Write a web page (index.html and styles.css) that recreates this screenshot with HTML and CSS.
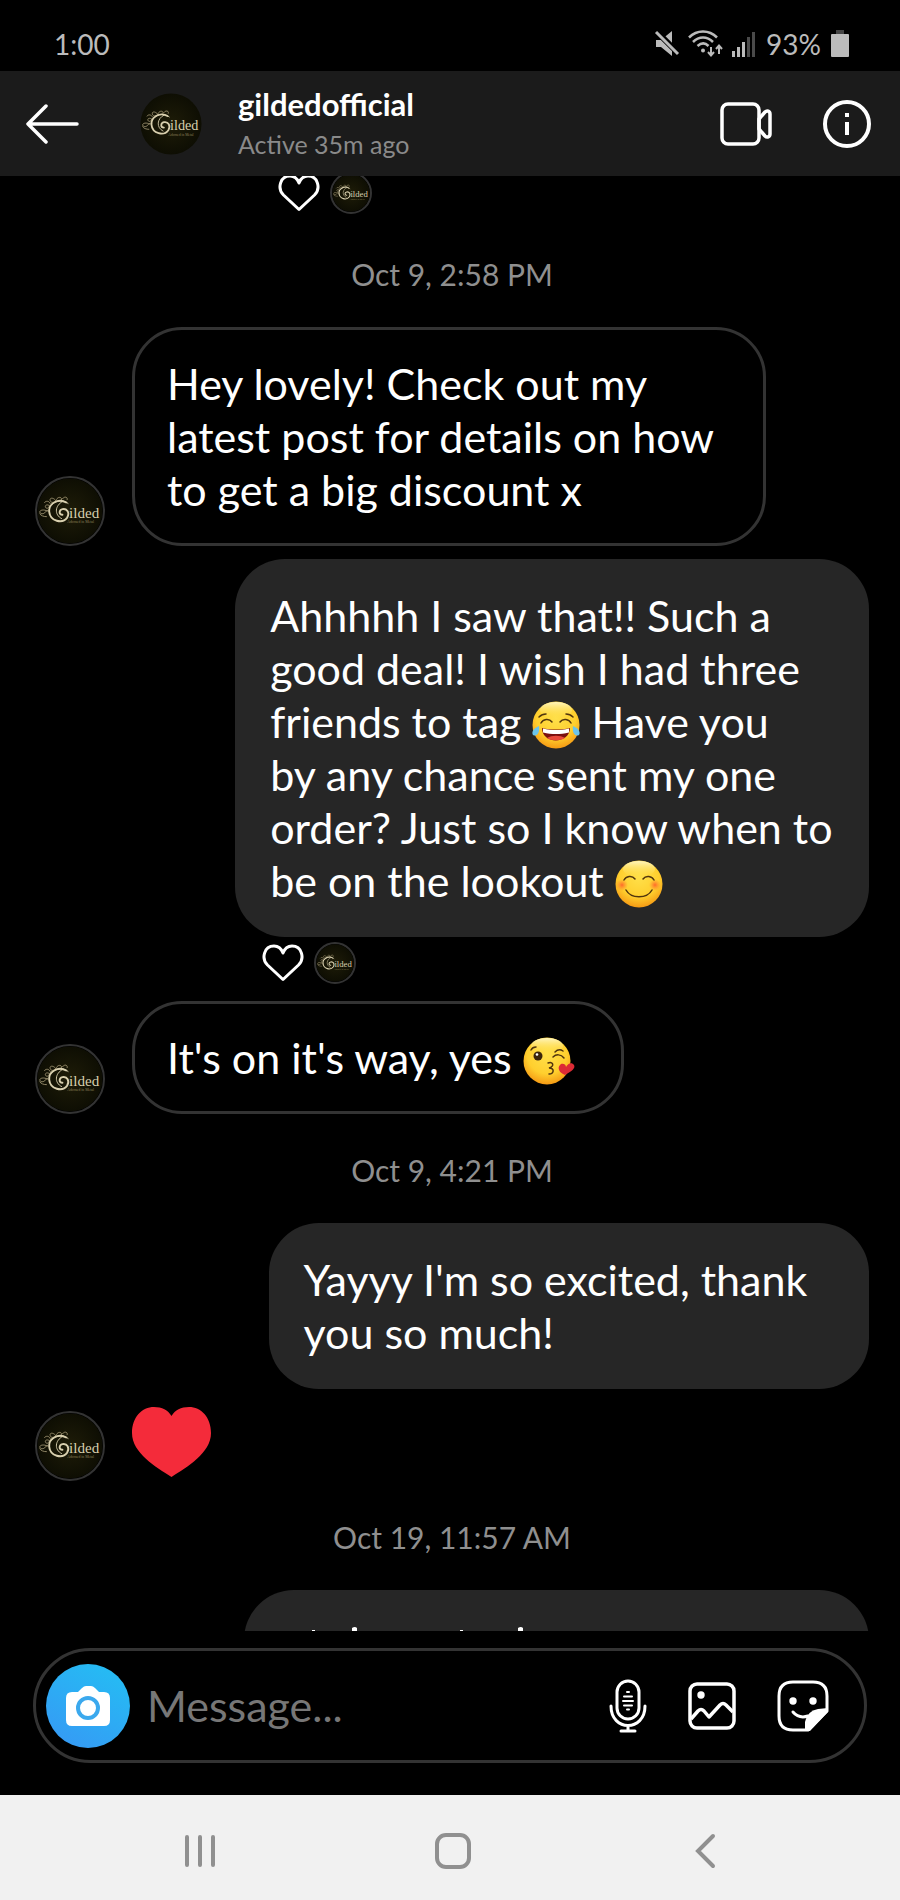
FILE: index.html
```html
<!DOCTYPE html>
<html lang="en">
<head>
    <meta charset="UTF-8">
    <meta name="viewport" content="width=device-width, initial-scale=1.0">
    <title>gildedofficial</title>
    <link rel="stylesheet" href="styles.css">
</head>
<body>

<!-- shared drawings -->
<svg class="defs" width="0" height="0" aria-hidden="true">
    <defs>
        <radialGradient id="logoBg">
            <stop offset="0" stop-color="#1e1c08"/>
            <stop offset="1" stop-color="#0e0e03"/>
        </radialGradient>
        <radialGradient id="face" cx="0.5" cy="0.35" r="0.65">
            <stop offset="0" stop-color="#ffe04a"/>
            <stop offset="0.65" stop-color="#ffcf2e"/>
            <stop offset="1" stop-color="#f59a14"/>
        </radialGradient>
        <linearGradient id="shine" x1="0" y1="0" x2="0" y2="1">
            <stop offset="0" stop-color="#fff6c0"/>
            <stop offset="1" stop-color="#ffe04a" stop-opacity="0"/>
        </linearGradient>
        <radialGradient id="blush">
            <stop offset="0" stop-color="#ff6a2b"/>
            <stop offset="1" stop-color="#ff8a2b" stop-opacity="0"/>
        </radialGradient>
        <symbol id="logo" viewBox="0 0 70 70">
            <circle cx="35" cy="35" r="34.5" fill="url(#logoBg)"/>
            <g fill="none" stroke="#a89c78" stroke-width="0.9" stroke-linecap="round">
                <path d="M20 24c-3-4-7-3-6 0s5 2 6 0c2-5 7-4 6-1M27 22c2-3 6-2 5 1M14 30c-3-3-6-1-5 1s4 1 4-1M11 35c-4-2-8-1-8 1s4 3 6 0 5-1 4 2M10 41c-3 0-6-1-7-3M14 27c-1-3-5-3-6-1"/>
            </g>
            <g fill="none" stroke="#d8cfae" stroke-linecap="round">
                <path d="M31 26c-8-5-19 1-18 10 1 10 14 13 19 6 3-5 0-10-5-9-4 1-4 6 0 6" stroke-width="2"/>
                <path d="M27 25c-8 4-9 14-1 18M16 28c5-5 12-5 17-1" stroke-width="1"/>
            </g>
            <text x="34" y="42" class="logo-name">ilded</text>
            <text x="32" y="48" class="logo-sub">Adorned in Metal</text>
        </symbol>
        <symbol id="heart" viewBox="0 0 42 38">
            <path d="M21 35.500 5.500 21C-1 14.500 2 2 12 2c4.500 0 7.500 3 9 7 1.500-4 4.500-7 9-7 10 0 13 12.500 6.500 19z" fill="none" stroke="#fff" stroke-width="3" stroke-linejoin="round"/>
        </symbol>
    </defs>
</svg>

<div class="status-bar">
    <span>1:00</span>
    <div class="status-icons">
        <svg width="26" height="28" viewBox="0 0 26 28">
            <path d="M2 10h5L18 1v25l-11-9H2z" fill="#bbb"/>
            <path d="M1 0 25 24" stroke="#000" stroke-width="6"/>
            <path d="M2 2 24 24" stroke="#bbb" stroke-width="3"/>
        </svg>
        <svg class="wifi" width="36" height="28" viewBox="0 0 36 28" fill="none" stroke="#bbb" stroke-width="2.500">
            <path d="M1 7.500C9-.5 21-.5 29 7.500M5 12c6-6 14-6 20 0M9.500 16c4-3.500 7.500-3.500 11 0"/>
            <circle cx="15" cy="20.500" r="2" fill="#bbb" stroke="none"/>
            <path d="M23 17v8M20 22l3 3.500 3-3.500M31 24v-8M28 19l3-3.500 3 3.500" stroke-width="2"/>
        </svg>
        <svg width="24" height="26" viewBox="0 0 24 26">
            <path d="M0 20h3v6H0zM5 16h3v10H5zM10 11h3v15h-3z" fill="#bbb"/>
            <path d="M15 6h3v20h-3zM20 1h3v25h-3z" fill="#4a4a4a"/>
        </svg>
        <span>93%</span>
        <svg width="18" height="28" viewBox="0 0 18 28">
            <path d="M5 0h8v4H5z" fill="#444"/>
            <rect y="4" width="18" height="23" rx="1" fill="#bbb"/>
        </svg>
    </div>
</div>

<header class="chat-header">
    <button class="icon-btn" aria-label="Back">
        <svg width="54" height="40" viewBox="0 0 54 40" fill="none" stroke="#fff" stroke-width="3.500" stroke-linecap="round" stroke-linejoin="round">
            <path d="M20 2 2 20l18 18M2 20h49"/>
        </svg>
    </button>
    <svg class="header-avatar"><use href="#logo"/></svg>
    <div class="who">
        <h1>gildedofficial</h1>
        <p>Active 35m ago</p>
    </div>
    <button class="icon-btn" aria-label="Video call">
        <svg width="52" height="44" viewBox="0 0 52 44" fill="none" stroke="#fff" stroke-width="3.500" stroke-linejoin="round">
            <rect x="2" y="2" width="37" height="40" rx="6"/>
            <path d="M39 17l6-7c2-2 5-1 5 2v20c0 3-3 4-5 2l-6-7z"/>
        </svg>
    </button>
    <button class="icon-btn" aria-label="Details">
        <svg width="50" height="50" viewBox="0 0 50 50">
            <circle cx="25" cy="25" r="22" fill="none" stroke="#fff" stroke-width="4"/>
            <path d="M23 14h4v4h-4zM23 23h4v13h-4z" fill="#fff"/>
        </svg>
    </button>
</header>

<main class="feed">
    <div class="reaction first">
        <svg class="like"><use href="#heart"/></svg>
        <svg class="tiny-avatar"><use href="#logo"/></svg>
    </div>

    <time class="stamp">Oct 9, 2:58 PM</time>

    <div class="row">
        <svg class="avatar"><use href="#logo"/></svg>
        <p class="bubble theirs wide">Hey lovely! Check out my<br>latest post for details on how<br>to get a big discount x</p>
    </div>

    <div class="row mine-row">
        <p class="bubble mine wide">Ahhhhh I saw that!! Such a<br>good deal! I wish I had three<br>friends to tag
            <svg class="emoji" viewBox="0 0 48 48" role="img" aria-label="tears of joy">
                <circle cx="24" cy="24" r="23.500" fill="url(#face)"/>
                <ellipse cx="24" cy="9" rx="16" ry="8" fill="url(#shine)"/>
                <path d="M7 16c2-2 4-3 7-3M34 13c3 0 5 1 7 3M9 22c2-4 8-5 11-1M28 21c3-4 9-3 11 1" fill="none" stroke="#51350d" stroke-width="1.500" stroke-linecap="round"/>
                <path d="M10 27c9 2 19 2 28 0 0 16-28 17-28 0z" fill="#7b1010"/>
                <path d="M11 27.500c9 2 17 2 26 0v4c-9 2-17 2-26 0z" fill="#fff"/>
                <path d="M15 37c5-3 13-3 18 0-4 3-14 3-18 0z" fill="#e84a3c"/>
                <path d="M7 25c-5 2-8 6-6 9 4 2 7-2 6-9zM41 25c5 2 8 6 6 9-4 2-7-2-6-9z" fill="#6cc4ea"/>
            </svg> Have you<br>by any chance sent my one<br>order? Just so I know when to<br>be on the lookout
            <svg class="emoji" viewBox="0 0 48 48" role="img" aria-label="smiling">
                <circle cx="24" cy="24" r="23.500" fill="url(#face)"/>
                <ellipse cx="24" cy="9" rx="16" ry="8" fill="url(#shine)"/>
                <circle cx="7" cy="25" r="6" fill="url(#blush)"/>
                <circle cx="40" cy="25" r="6" fill="url(#blush)"/>
                <path d="M9 20c2-4 8-5 11-1M28 19c3-4 9-3 11 1M11 30c5 9 21 9 26 0" fill="none" stroke="#51350d" stroke-width="1.500" stroke-linecap="round"/>
            </svg></p>
    </div>

    <div class="reaction">
        <svg class="like"><use href="#heart"/></svg>
        <svg class="tiny-avatar"><use href="#logo"/></svg>
    </div>

    <div class="row">
        <svg class="avatar"><use href="#logo"/></svg>
        <p class="bubble theirs short">It's on it's way, yes
            <svg class="emoji kiss" viewBox="0 0 52 48" role="img" aria-label="blowing a kiss">
                <circle cx="24" cy="24" r="23.500" fill="url(#face)"/>
                <ellipse cx="24" cy="9" rx="16" ry="8" fill="url(#shine)"/>
                <circle cx="15" cy="19" r="4.500" fill="#3a250b"/>
                <circle cx="14" cy="17.500" r="1.300" fill="#fff"/>
                <path d="M8 13c1-2 3-3 5-3M32 15c2-2 5-3 8-1M30 20c3-3 8-3 11 1M25 26c5-2 7 3 1 5 6 0 5 6 0 6" fill="none" stroke="#51350d" stroke-width="1.500" stroke-linecap="round"/>
                <path d="M42 38c-7-3-8-8-4-11 3-1 5 1 5 3 2-4 6-5 8-2 2 4-4 7-9 10z" fill="#dc2b35"/>
            </svg></p>
    </div>

    <time class="stamp">Oct 9, 4:21 PM</time>

    <div class="row mine-row">
        <p class="bubble mine medium">Yayyy I'm so excited, thank<br>you so much!</p>
    </div>

    <div class="row heart-row">
        <svg class="avatar"><use href="#logo"/></svg>
        <svg class="big-heart" viewBox="0 0 79 70" role="img" aria-label="heart">
            <path d="M39.500 70C24 60 0 46 0 26 0 10 10 0 22 0c8 0 14 3 17.500 9C43 3 49 0 57 0c12 0 22 10 22 26 0 20-24 34-39.500 44z" fill="#f42b3a"/>
        </svg>
    </div>

    <time class="stamp">Oct 19, 11:57 AM</time>

    <div class="row mine-row">
        <!-- next message, only the tips of its tall letters show -->
        <div class="bubble mine cut">
            <svg width="100%" height="53" aria-hidden="true" fill="#fff">
                <path d="M33 10h3v3h-3zM73 8q3-2 5 0v5h-5zM181 10h3v3h-3zM239 8q3-2 5 0v5h-5z"/>
            </svg>
        </div>
    </div>
</main>

<form class="composer">
    <button class="camera" type="button" aria-label="Camera">
        <svg width="44" height="40" viewBox="0 0 44 40">
            <path d="M6 6h6l4-4q2-2 4-2h5q2 0 4 2l4 4h5q6 0 6 6v22q0 6-6 6H6q-6 0-6-6V12q0-6 6-6z" fill="#fff"/>
            <circle cx="22" cy="22" r="10" fill="#fff" stroke="#3ba9ee" stroke-width="4"/>
        </svg>
    </button>
    <input type="text" placeholder="Message..." aria-label="Message">
    <button class="icon-btn" type="button" aria-label="Voice message">
        <svg width="38" height="54" viewBox="0 0 38 54" fill="none" stroke="#fff" stroke-width="3" stroke-linecap="round">
            <rect x="8" y="2" width="22" height="38" rx="11"/>
            <path d="M2 27c0 26 34 26 34 0M19 47v5M12 52h14"/>
            <path d="M18 13h2M15 17.500h8M14 22h10M15 26.500h8M18 30.500h2" stroke-width="2"/>
        </svg>
    </button>
    <button class="icon-btn" type="button" aria-label="Gallery">
        <svg width="48" height="48" viewBox="0 0 48 48" fill="none" stroke="#fff" stroke-width="3.500" stroke-linejoin="round">
            <rect x="2" y="2" width="44" height="44" rx="7"/>
            <circle cx="13" cy="13" r="3.700" fill="#fff" stroke="none"/>
            <path d="m3 37 7-8q3-3 6 0l5 6 11-12q3-3 6 0l7 7"/>
        </svg>
    </button>
    <button class="icon-btn" type="button" aria-label="Stickers">
        <svg width="52" height="52" viewBox="0 0 52 52">
            <path d="M31 50H16Q2 50 2 36V16Q2 2 16 2h20q14 0 14 14v15z" fill="none" stroke="#fff" stroke-width="3"/>
            <path d="M28 51V42q2-11 13-13l10-1v4L33 51z" fill="#fff"/>
            <circle cx="16" cy="21" r="3.700" fill="#fff"/>
            <circle cx="36" cy="21" r="3.700" fill="#fff"/>
            <path d="M16 32q6 7 15 4" fill="none" stroke="#fff" stroke-width="3" stroke-linecap="round"/>
        </svg>
    </button>
</form>

<nav class="nav-bar">
    <button class="icon-btn" aria-label="Recent apps">
        <svg width="36" height="36" viewBox="0 0 36 36" stroke="#909090" stroke-width="4" stroke-linecap="round">
            <path d="M5 4v28M18 4v28M31 4v28"/>
        </svg>
    </button>
    <button class="icon-btn" aria-label="Home">
        <svg width="36" height="36" viewBox="0 0 36 36" fill="none" stroke="#909090" stroke-width="4">
            <rect x="2" y="2" width="32" height="32" rx="9"/>
        </svg>
    </button>
    <button class="icon-btn" aria-label="Back">
        <svg width="36" height="36" viewBox="0 0 36 36" fill="none" stroke="#909090" stroke-width="4" stroke-linecap="round">
            <path d="M26 3 11 18l15 15"/>
        </svg>
    </button>
</nav>

</body>
</html>
```
FILE: styles.css
```css
* {
    box-sizing: border-box;
}

body {
    margin: 0;
    height: 100vh;
    display: flex;
    flex-direction: column;
    background: #000;
    color: #fff;
    font-family: Lato, "Open Sans", sans-serif;
}

h1,
p {
    margin: 0;
}

svg {
    display: block;
    flex: none;
}

.defs {
    position: absolute;
}

.icon-btn {
    padding: 0;
    border: none;
    background: none;
    cursor: pointer;
}

.logo-name {
    font: 16px "Liberation Serif", serif;
    fill: #d8cfae;
}

.logo-sub {
    font: 4px "Liberation Serif", serif;
    fill: #8d8158;
}

/* status bar */
.status-bar {
    height: 71px;
    flex: none;
    padding: 16px 51px 0 54px;
    display: flex;
    justify-content: space-between;
    align-items: center;
    font-size: 28px;
    color: #bbb;
}

.status-icons {
    display: flex;
    align-items: center;
    gap: 8px;
}

.status-icons span {
    padding: 0 2px;
}

/* header */
.chat-header {
    height: 105px;
    flex: none;
    padding: 0 28px 0 26px;
    display: flex;
    align-items: center;
    background: #1b1b1b;
}

.header-avatar {
    width: 62px;
    height: 62px;
    margin: 0 36px 0 60px;
}

.who {
    flex: 1;
}

.who h1 {
    font-size: 31px;
    line-height: 40px;
}

.who p {
    font-size: 25px;
    line-height: 40px;
    color: #8a8a8a;
}

.chat-header .icon-btn + .icon-btn {
    margin-left: 50px;
}

/* messages */
.feed {
    flex: 1;
    min-height: 0;
    overflow: hidden;
    padding: 0 31px 0 35px;
    display: flex;
    flex-direction: column;
}

.feed > * {
    flex: none;
}

.stamp {
    text-align: center;
    font-size: 30px;
    line-height: 40px;
    color: #8f8f8f;
    margin: 36px 0 33px;
}

.row {
    display: flex;
    align-items: flex-end;
    gap: 27px;
}

.mine-row {
    justify-content: flex-end;
}

.row + .mine-row {
    margin-top: 13px;
}

.avatar {
    width: 70px;
    height: 70px;
    border: 2px solid #333;
    border-radius: 50%;
}

.bubble {
    padding: 30px 35px;
    border-radius: 50px;
    font-size: 43px;
    line-height: 53px;
    white-space: nowrap;
}

.theirs {
    padding: 27px 32px;
    border: 3px solid #333;
}

.mine {
    background: #262626;
}

.wide {
    min-width: 76%;
}

.medium {
    min-width: 72%;
}

.short {
    min-width: 59%;
}

.cut {
    min-width: 75%;
}

.emoji {
    display: inline-block;
    width: 48px;
    height: 48px;
    vertical-align: -7px;
    margin: -4px 0;
}

.kiss {
    width: 52px;
}

.reaction {
    display: flex;
    align-items: center;
    gap: 10px;
    padding-left: 227px;
    margin: 5px 0 17px;
}

.reaction.first {
    padding-left: 243px;
    margin: -4px 0 4px;
}

.like {
    width: 42px;
    height: 38px;
}

.tiny-avatar {
    width: 42px;
    height: 42px;
    border: 2px solid #333;
    border-radius: 50%;
}

.heart-row {
    margin-top: 18px;
}

.big-heart {
    width: 79px;
    height: 70px;
    margin-bottom: 4px;
}

/* message box */
.composer {
    flex: none;
    height: 115px;
    margin: 17px 33px 32px;
    padding: 0 35px 0 10px;
    display: flex;
    align-items: center;
    gap: 41px;
    border: 3px solid #333;
    border-radius: 58px;
}

.camera {
    width: 84px;
    height: 84px;
    flex: none;
    padding: 0;
    border: none;
    border-radius: 50%;
    display: flex;
    align-items: center;
    justify-content: center;
    background: linear-gradient(30deg, #3797f5, #23c0f3);
    cursor: pointer;
}

.composer input {
    flex: 1;
    min-width: 0;
    padding: 0;
    margin-left: -24px;
    border: none;
    outline: none;
    background: none;
    color: #fff;
    font: inherit;
    font-size: 43px;
}

.composer input::placeholder {
    color: #777;
}

/* system buttons */
.nav-bar {
    flex: none;
    height: 105px;
    padding: 6px 177px 0 182px;
    display: flex;
    justify-content: space-between;
    align-items: center;
    background: #f1f1f1;
}
```
